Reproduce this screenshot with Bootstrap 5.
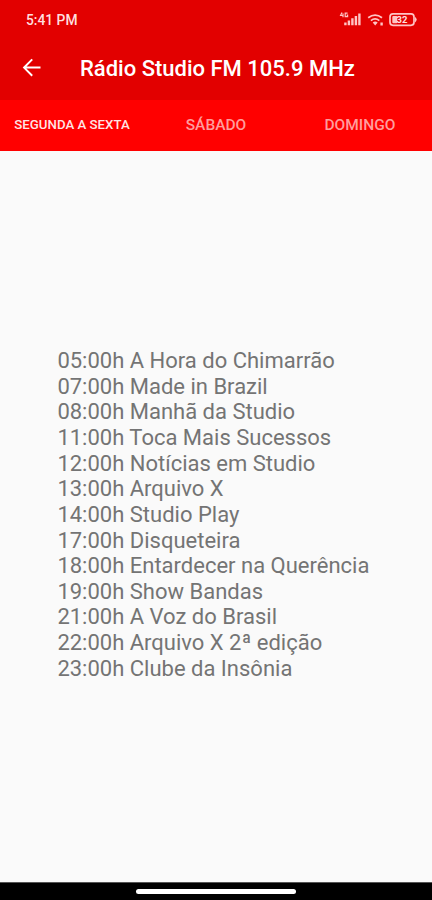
<!DOCTYPE html>
<html lang="pt-BR">
<head>
<meta charset="utf-8">
<meta name="viewport" content="width=device-width, initial-scale=1">
<title>Rádio Studio FM 105.9 MHz</title>
<link href="https://cdn.jsdelivr.net/npm/bootstrap@5.3.0/dist/css/bootstrap.min.css" rel="stylesheet">
<style>
body { font-family: Roboto, "Noto Sans", sans-serif; background: #fafafa; height: 900px; }
.app-top { background: #e20000; height: 100px; }
.status-bar { height: 40px; padding: 0 15px 0 26px; }
.clock { font-size: 13.8px; font-weight: 500; line-height: 40px; color: #ffdede; }
.title-bar { height: 60px; padding: 0 20px 4px; }
.app-title { font-size: 22px; font-weight: 500; line-height: 26px; margin-left: 36px; padding-top: 2px; }
.tab-strip { background: #f00; height: 50.5px; }
.tab-strip .nav-link { font-size: 15.5px; font-weight: 500; line-height: 50px; padding: 0; color: #ff9d9d; border-radius: 0; }
.tab-strip .nav-link.active { font-size: 13.25px; color: #ffe4e4; }
.schedule { font-size: 22px; line-height: 25.63px; color: #747474; padding: 0 0 3px 57.4px; }
.gesture-bar { background: #000; height: 18px; border-top: 1px solid #555; }
.gesture-pill { width: 160px; height: 5px; background: #fff; }
</style>
<script src="https://cdn.jsdelivr.net/npm/bootstrap@5.3.0/dist/js/bootstrap.bundle.min.js"></script>
</head>
<body class="d-flex flex-column overflow-hidden">
<header class="app-top flex-shrink-0 text-white">
  <div class="status-bar d-flex align-items-center justify-content-between">
    <span class="clock">5:41 PM</span>
    <svg width="78" height="18" viewBox="339 11 78 18" fill="#ffc4c4" aria-hidden="true">
      <path d="M342 12.6l-1.4 2.9h2.8M343 13.6v3.6M347.6 13.2h-2.4v3.4h2.4v-1.6h-1" fill="none" stroke="#ffc4c4" stroke-width="1.2"/>
      <path d="M344.2 22.4h2.4v2.8h-2.4zM347.7 20.4h2.4v4.8h-2.4zM351.2 18.2h2.4v7h-2.4zM354.7 16h2.4v9.2h-2.4zM358.2 13.4h2.4v11.8h-2.4z"/>
      <g fill="none" stroke="#ffc4c4" stroke-width="1.8"><path d="M368.2 17.8q6.9-5.4 13.8 0"/><path d="M370.9 20.6q4.2-3.4 8.4 0"/></g>
      <path d="M372.7 22.4q2.5-1.8 5 0L375.2 25.4zM380.4 22.4h2.4v3h-2.4z"/>
      <rect x="390" y="13.9" width="24" height="11.4" rx="3" fill="none" stroke="#ffc4c4" stroke-width="1.7"/>
      <path d="M415 16.8q3.4 2.8 0 5.6z"/>
      <rect x="392.3" y="16" width="5" height="7.2" rx="1"/>
      <text x="396.6" y="23" font-size="9.5" font-weight="700" fill="#ffe0e0">32</text>
    </svg>
  </div>
  <div class="title-bar d-flex align-items-center">
    <svg width="24" height="24" viewBox="20 55.6 24 24" fill="none" stroke="#fff" stroke-width="2" aria-label="Voltar"><path d="M40.5 67.2H24.2M32.2 59l-8.1 8.2 8.1 8.2"/></svg>
    <h1 class="app-title mb-0 text-nowrap">Rádio Studio FM 105.9 MHz</h1>
  </div>
</header>
<nav class="tab-strip nav nav-fill row g-0 flex-shrink-0 text-center">
  <a class="nav-link active col-4" href="#">SEGUNDA A SEXTA</a>
  <a class="nav-link col-4" href="#">SÁBADO</a>
  <a class="nav-link col-4" href="#">DOMINGO</a>
</nav>
<main class="schedule flex-grow-1 d-flex flex-column justify-content-center text-nowrap">
  <div>05:00h A Hora do Chimarrão</div>
  <div>07:00h Made in Brazil</div>
  <div>08:00h Manhã da Studio</div>
  <div>11:00h Toca Mais Sucessos</div>
  <div>12:00h Notícias em Studio</div>
  <div>13:00h Arquivo X</div>
  <div>14:00h Studio Play</div>
  <div>17:00h Disqueteira</div>
  <div>18:00h Entardecer na Querência</div>
  <div>19:00h Show Bandas</div>
  <div>21:00h A Voz do Brasil</div>
  <div>22:00h Arquivo X 2ª edição</div>
  <div>23:00h Clube da Insônia</div>
</main>
<footer class="gesture-bar flex-shrink-0 d-flex align-items-center justify-content-center">
  <div class="gesture-pill rounded-pill"></div>
</footer>
</body>
</html>
